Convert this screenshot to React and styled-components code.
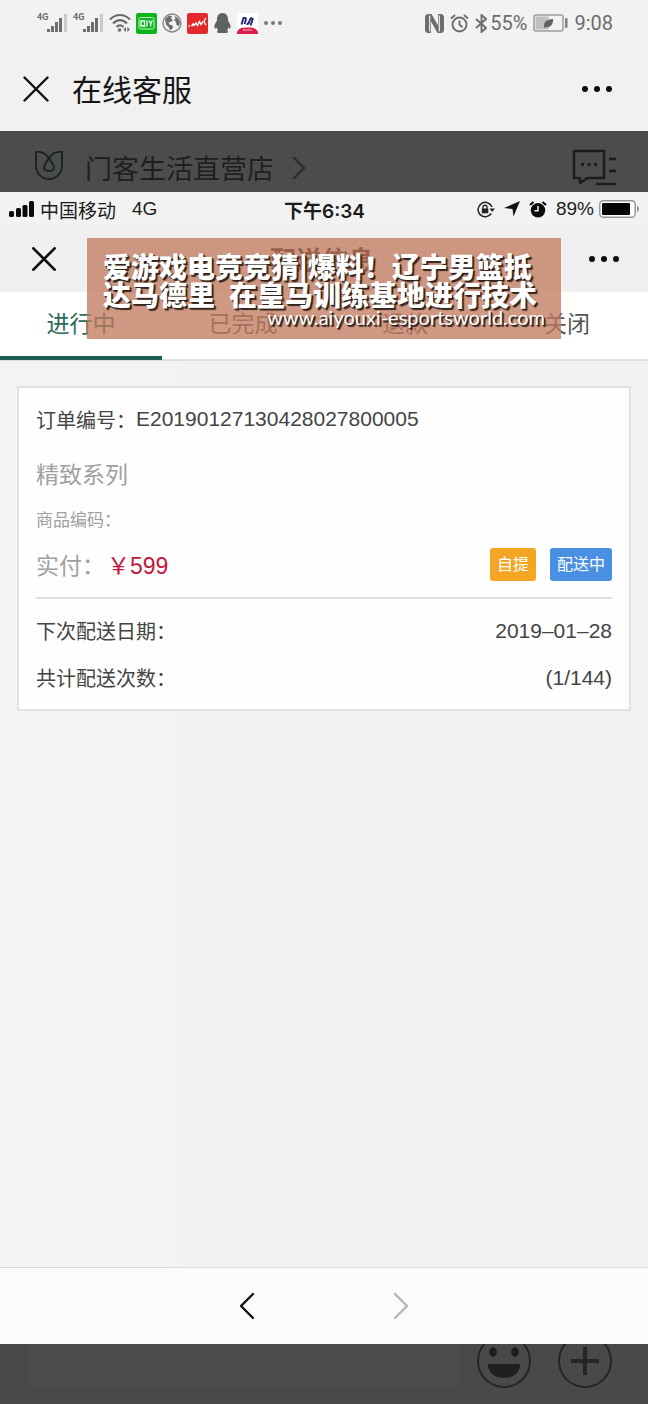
import React, { useState } from 'react';
import styled, { createGlobalStyle } from 'styled-components';

const GlobalStyles = createGlobalStyle`
  * {
    box-sizing: border-box;
  }

  body {
    margin: 0;
    background-color: #f2f3f3;
    font-family: 'Liberation Sans', 'Noto Sans CJK SC', sans-serif;
  }

  svg {
    display: block;
    flex: none;
  }

  button {
    padding: 0;
    border: none;
    background: none;
    font-family: inherit;
    cursor: pointer;
  }
`;

const Page = styled.div`
  min-height: 100vh;
  display: flex;
  flex-direction: column;
`;

const AndroidStatus = styled.div`
  display: flex;
  justify-content: space-between;
  align-items: center;
  height: 46px;
  padding: 0 35px 0 37px;
  background-color: #f1f2f1;
  color: #6b6e6b;
  font-family: Roboto, sans-serif;
  font-size: 20px;
`;

const IconRow = styled.div`
  display: flex;
  align-items: center;
  gap: ${(props) => props.$gap}px;
`;

const Signal = styled.div`
  display: flex;
  align-items: flex-start;
  width: 31px;
  font-size: 9px;
  font-weight: 700;
  line-height: 9px;

  svg {
    margin-left: -1px;
  }
`;

const TitleBar = styled.header`
  display: flex;
  align-items: center;
  height: 85px;
  padding: 0 35px 0 23px;
  background-color: #f1f1f1;
`;

const PageTitle = styled.h1`
  flex: 1;
  margin: 0 0 0 23px;
  padding-bottom: 2px;
  color: #161616;
  font-size: 30px;
  font-weight: 400;
`;

const StoreBar = styled.div`
  display: flex;
  align-items: center;
  height: 61px;
  padding: 12px 31px 0 35px;
  background-color: #4c4c4c;
  color: #1e2020;
`;

const StoreName = styled.div`
  margin: 0 18px 0 22px;
  font-size: 27px;
`;

const Spacer = styled.div`
  flex: 1;
`;

const Sheet = styled.div`
  position: relative;
  flex: 1;
  display: flex;
  flex-direction: column;
`;

const PhoneStatus = styled.div`
  display: grid;
  grid-template-columns: 1fr auto 1fr;
  align-items: center;
  height: 34px;
  padding: 0 8px 0 9px;
  background-color: #f2f2f2;
  color: #1c1c1c;
  font-size: 19px;
`;

const Carrier = styled.div`
  display: flex;
  align-items: center;
  gap: 6px;
`;

const Network = styled.span`
  margin-left: 10px;
`;

const Clock = styled.div`
  font-family: Inter, 'Noto Sans CJK SC', sans-serif;
  font-weight: 600;
`;

const PhoneIcons = styled.div`
  display: flex;
  justify-content: flex-end;
  align-items: center;
  gap: 9px;
`;

const BatteryLevel = styled.div`
  display: flex;
  align-items: center;
  gap: 5px;
`;

const SheetBar = styled.div`
  display: flex;
  justify-content: space-between;
  align-items: center;
  height: 66px;
  padding: 0 28px 0 32px;
  background-color: #f0f0f0;
`;

const SheetTitle = styled.h2`
  margin: 0;
  padding-bottom: 2px;
  color: #111111;
  font-size: 26px;
  font-weight: 600;
`;

const Tabs = styled.div`
  display: flex;
  height: 69px;
  background-color: #ffffff;
  box-shadow: inset 0 -2px #dfdfdf;
`;

const Tab = styled.button`
  flex: 1;
  height: 68px;
  padding-bottom: 8px;
  color: ${(props) => (props.$active ? '#2c6a5a' : '#555555')};
  font-size: 23px;
  box-shadow: ${(props) => (props.$active ? 'inset 0 -4px #1d5b4c' : 'none')};
`;

const Content = styled.main`
  flex: 1;
  padding: 25px 17px;
  background: linear-gradient(90deg, #f2f3f5 25%, #f1f2f2 30%);
`;

const Card = styled.section`
  padding: 0 17px 8px;
  border: 2px solid #e1e2e3;
  background-color: #fefefe;
  color: #444444;
`;

const OrderNumber = styled.div`
  display: flex;
  align-items: center;
  height: 64px;
  padding-bottom: 2px;
  font-size: 20px;
`;

const OrderValue = styled.span`
  font-size: 21px;
`;

const Series = styled.div`
  color: #a0a0a0;
  font-size: 23px;
  line-height: 47px;
`;

const ProductCode = styled.div`
  color: #a0a0a0;
  font-size: 17px;
  line-height: 43px;
`;

const PriceRow = styled.div`
  display: flex;
  align-items: center;
  gap: 14px;
  height: 44px;
  margin-bottom: 11px;
  color: #a0a0a0;
  font-size: 23px;
`;

const Price = styled.span`
  margin-left: 2px;
  color: #c4183c;
`;

const Tag = styled.span`
  padding: 0 7px;
  border-radius: 3px;
  background-color: ${(props) => props.$color};
  color: #ffffff;
  font-size: 16px;
  line-height: 33px;
`;

const Details = styled.div`
  padding-top: 8px;
  border-top: 2px solid #dddfdf;
`;

const DetailRow = styled.div`
  display: flex;
  justify-content: space-between;
  align-items: center;
  height: 47px;
  font-size: 20px;
`;

const Pager = styled.nav`
  display: flex;
  justify-content: center;
  align-items: center;
  gap: 138px;
  height: 77px;
  border-top: 1px solid #dcdde0;
  background-color: #fafbfd;
`;

const ChatBar = styled.div`
  display: flex;
  align-items: flex-start;
  height: 60px;
  padding: 0 36px 0 28px;
  background-color: #48494a;

  button + button {
    margin-left: 27px;
  }
`;

const ChatInput = styled.input`
  flex: 1;
  min-width: 0;
  height: 43px;
  margin-right: 19px;
  padding: 0 12px;
  border: none;
  background-color: #4b4c4d;
  color: #1e2020;
  font-size: 20px;
`;

const Banner = styled.div`
  position: absolute;
  top: 46px;
  left: 87px;
  right: 87px;
  height: 101px;
  padding: 14px 16px 0;
  overflow: hidden;
  background-color: rgba(192, 121, 92, 0.76);
  color: #ffffff;
  white-space: nowrap;
  text-shadow: 1px 1px 0 #33241e, 2px 2px 1px #33241e;
`;

const BannerTitle = styled.div`
  font-family: 'Noto Sans CJK SC', sans-serif;
  font-size: 28px;
  font-weight: 900;
  line-height: 28px;
`;

const BannerLink = styled.a`
  display: block;
  color: #ffffff;
  font-family: Lato, sans-serif;
  font-size: 20px;
  line-height: 18px;
  text-align: right;
  text-decoration: none;
`;

function SignalIcon() {
  return (
    <Signal>
      4G
      <svg width="21" height="20" viewBox="0 0 21 20" fill="#6b6e6b">
        <rect x="0" y="16" width="3" height="3" />
        <rect x="4" y="13" width="3" height="6" />
        <rect x="8" y="9" width="3" height="10" />
        <rect x="12" y="5" width="3" height="14" />
        <rect x="17" y="1" width="3" height="18" fill="#c9cbc9" />
      </svg>
    </Signal>
  );
}

function WifiIcon() {
  return (
    <svg width="22" height="20" viewBox="0 0 22 20" fill="none" stroke="#6b6e6b" strokeWidth="2.2">
      <path d="M1 6.5C7 .5 15 .5 21 6.5" />
      <path d="M4 10.5C8.5 6 13.5 6 18 10.5" />
      <path d="M7.5 14c2.3-2.2 4.700-2.200 7 0" />
      <circle cx="10.5" cy="17" r="1.8" fill="#6b6e6b" stroke="none" />
      <path d="M17 14v5l-2.700-2.500zM18.300 14v5l2.700-2.500z" fill="#6b6e6b" stroke="none" />
    </svg>
  );
}

function VideoAppIcon() {
  return (
    <svg width="21" height="21" viewBox="0 0 21 21" fill="none" stroke="#fff">
      <rect width="21" height="21" rx="2" fill="#0cb51c" stroke="none" />
      <path d="M3 6.500C3 5 4 4.500 5.500 4.500h10C17 4.500 18 5 18 6.500v8c0 1-1 1.500-2.500 1.500h-10C4 16 3 15.500 3 14.500z" strokeWidth=".8" />
      <path d="M5 8h3.500v5H5zM8 12l1 2M11 7.500v6M13 7.500l1.700 3 1.700-3M14.700 10.500v3" strokeWidth="1.300" />
    </svg>
  );
}

function GlobeIcon() {
  return (
    <svg width="20" height="20" viewBox="0 0 20 20">
      <circle cx="10" cy="10" r="9" fill="none" stroke="#858785" strokeWidth="1.400" />
      <path d="M3 6l4-3.500 3 .5-1 2.500 2 1.500-2.500 2-2 .5 1 2 3 1 .5 2-2.500 3-2-3.500-2.500-2.500zM12 3l4 2 2 4-1 4-2.500-1-.5-3-2-2 1.500-1.500z" fill="#6b6e6b" />
    </svg>
  );
}

function StockAppIcon() {
  return (
    <svg width="21" height="21" viewBox="0 0 21 21" fill="none" stroke="#fff">
      <rect width="21" height="21" rx="2" fill="#e3292c" stroke="none" />
      <path d="M1.500 13.500l1.500-1M4.500 13l1.500-2 1 1.500 2-2.500 1.500 2.500 2-4 1.500 3 2.500-3.500" strokeWidth="1.400" />
      <path d="M19 5c-2 2-2 5 0 7" strokeWidth="1.200" />
    </svg>
  );
}

function PenguinIcon() {
  return (
    <svg width="19" height="20" viewBox="0 0 19 20" fill="#5f625f">
      <path d="M9.500 0C5.500 0 4 3 4 6.500L3.800 8C2.500 9.800 1 12.500 1.500 15c.5 1 1.300.2 2-.8.2 1.300.8 2.300 1.600 3C3.500 18 3.800 20 6 20h7c2.200 0 2.500-2 .9-2.800.8-.7 1.400-1.700 1.600-3 .7 1 1.500 1.800 2 .8.500-2.500-1-5.200-2.300-7L15 6.500C15 3 13.500 0 9.500 0z" />
    </svg>
  );
}

function NewsAppIcon() {
  return (
    <svg width="21" height="21" viewBox="0 0 21 21" fill="none">
      <rect width="21" height="21" rx="2" fill="#fff" />
      <path d="M4.500 11.500L6.500 5H8c1.500 0 1 1.500.5 3L7.500 11M9.500 11c2 .5 2.500-1 3-3s1-3 2.500-3M13 11.500h1L16 5" stroke="#25247b" strokeWidth="1.900" />
      <path d="M0 19c2-4 5-4.500 10.500-4.500S19 15 21 19v2H0z" fill="#dc1d4b" />
      <path d="M6 17h9" stroke="#f6a6b8" strokeWidth="1.400" strokeDasharray="2 .6" />
    </svg>
  );
}

function NfcIcon() {
  return (
    <svg width="19" height="19" viewBox="0 0 19 19">
      <path d="M4 0h2.500L13 11.500V0H15c3 0 4 1 4 4v11c0 3-1 4-4 4h-2.500L6 7.500V19H4c-3 0-4-1-4-4V4c0-3 1-4 4-4z" fill="#6b6e6b" />
      <path d="M4.700 1.500v16M14.300 1.500v16" stroke="#f1f2f1" strokeWidth="1.200" />
    </svg>
  );
}

function AlarmIcon() {
  return (
    <svg width="19" height="19" viewBox="0 0 19 19" fill="none" stroke="#6b6e6b" strokeWidth="1.900">
      <circle cx="9.500" cy="10.500" r="7" />
      <path d="M9.500 6.500v4.300l3 2.500M1 4.500l4-3.500M18 4.500l-4-3.500" />
    </svg>
  );
}

function BluetoothIcon() {
  return (
    <svg width="12" height="19" viewBox="0 0 12 19" fill="none" stroke="#6b6e6b" strokeWidth="1.900">
      <path d="M1 5l10 9-4.500 4V1L11 5 1 14" />
    </svg>
  );
}

function EcoBatteryIcon() {
  return (
    <svg width="35" height="18" viewBox="0 0 35 18">
      <rect x="1" y="1" width="29" height="16" rx="2" fill="none" stroke="#9c9e9c" strokeWidth="1.500" />
      <rect x="2.500" y="2.500" width="13" height="13" fill="#bfc1bf" />
      <path d="M11 14c-.5-5 1.500-8.500 9-9 .5 5-2.500 9-7 8z" fill="#5f625f" />
      <rect x="32" y="4" width="2.500" height="10" rx="1" fill="#7d807d" />
    </svg>
  );
}

function CloseIcon({ size, weight }) {
  return (
    <svg width={size} height={size} viewBox="0 0 26 26" fill="none" stroke="#111" strokeWidth={weight}>
      <path d="M1.500 1.500l23 23M24.500 1.500l-23 23" strokeLinecap="round" />
    </svg>
  );
}

function DotsIcon({ width = 32, color = '#0b0b0b', r = 3 }) {
  return (
    <svg width={width} height="8" viewBox={`0 0 ${width} 8`} fill={color}>
      <circle cx={r + 1} cy="4" r={r} />
      <circle cx={width / 2} cy="4" r={r} />
      <circle cx={width - r - 1} cy="4" r={r} />
    </svg>
  );
}

function TulipIcon() {
  return (
    <svg width="28" height="34" viewBox="1 1 28 34" fill="none" stroke="#1b2624" strokeWidth="2">
      <path d="M2 2c4-.5 9 1 12 5l1 2 1-2c3-4 8-5.500 12-5v14c0 7-5.500 13-13 13S2 23 2 16z" />
      <path d="M15 8c-2 4-5 6.500-5 9.500C10 20 12.500 21 15 21s5-1 5-3.500C20 14.500 17 12 15 8" />
    </svg>
  );
}

function ChatListIcon() {
  return (
    <svg width="45" height="37" viewBox="0 0 45 37" fill="none" stroke="#1b1c1c" strokeWidth="2.500">
      <path d="M2 2h30v27H15.500L8 34v-5H2z" strokeLinejoin="round" />
      <path d="M37 10h7M37 22h7M24 35h20" />
      <path d="M9 15.500h3M15.500 15.500h3M22 15.500h3" strokeWidth="3" />
    </svg>
  );
}

function ChevronIcon({ left, width, height, color, weight }) {
  return (
    <svg width={width} height={height} viewBox="0 0 16 28" fill="none" stroke={color} strokeWidth={weight}>
      <path d={left ? 'M14 2L2 14l12 12' : 'M2 2l12 12L2 26'} strokeLinecap="round" strokeLinejoin="round" />
    </svg>
  );
}

function CellBarsIcon() {
  return (
    <svg width="25" height="16" viewBox="0 0 25 16" fill="#0b0b0b">
      <rect x="0" y="10" width="5" height="6" rx="1.500" />
      <rect x="7" y="7" width="5" height="9" rx="1.500" />
      <rect x="13.500" y="4" width="5" height="12" rx="1.500" />
      <rect x="20" y="0" width="5" height="16" rx="1.500" />
    </svg>
  );
}

function RotationLockIcon() {
  return (
    <svg width="18" height="17" viewBox="0 0 18 17" fill="none" stroke="#222">
      <path d="M15 6A7.200 7.200 0 1 0 14.300 12.500" strokeWidth="1.500" />
      <path d="M12.500 7.500h5.500L15.200 11z" fill="#222" stroke="none" />
      <rect x="4.800" y="7.500" width="6.500" height="4.800" fill="#222" stroke="none" />
      <path d="M6 8V6.200c0-2.600 4-2.600 4 0V8" strokeWidth="1.300" />
    </svg>
  );
}

function LocationIcon() {
  return (
    <svg width="16" height="16" viewBox="0 0 16 16" fill="#111">
      <path d="M16 0L9.500 15.500 8.500 8 0 7z" />
    </svg>
  );
}

function SolidAlarmIcon() {
  return (
    <svg width="18" height="17" viewBox="0 0 18 17" fill="none">
      <circle cx="9" cy="9.300" r="7.200" fill="#0b0b0b" />
      <path d="M1 4l3.500-3M17 4l-3.500-3" stroke="#0b0b0b" strokeWidth="2.200" />
      <path d="M9 5v4.800H5.500" stroke="#f2f2f2" strokeWidth="1.500" />
    </svg>
  );
}

function BatteryIcon() {
  return (
    <svg width="41" height="18" viewBox="0 0 41 18">
      <rect x=".8" y=".8" width="35.400" height="16.400" rx="3.500" fill="#fff" stroke="#939393" strokeWidth="1.400" />
      <rect x="3" y="3" width="28" height="12" rx="1" fill="#050505" />
      <path d="M38 6c2.500 0 2.500 6 0 6z" fill="#939393" />
    </svg>
  );
}

function SmileIcon() {
  return (
    <svg width="54" height="44" viewBox="0 10 54 44">
      <circle cx="27" cy="27" r="26" fill="none" stroke="#242526" strokeWidth="2" />
      <ellipse cx="16" cy="18" rx="3.800" ry="4.800" fill="#1f2021" />
      <ellipse cx="38" cy="18" rx="3.800" ry="4.800" fill="#1f2021" />
      <path d="M11 30h32c0 9-7 14-16 14s-16-5-16-14z" fill="#1f2021" />
    </svg>
  );
}

function PlusIcon() {
  return (
    <svg width="54" height="44" viewBox="0 10 54 44" fill="none" stroke="#242526">
      <circle cx="27" cy="27" r="26" strokeWidth="2" />
      <path d="M27 13v28M13 27h28" strokeWidth="4" />
    </svg>
  );
}

const tabs = ['进行中', '已完成', '退款', '关闭'];

function App() {
  const [activeTab, setActiveTab] = useState(0);

  return (
    <>
      <GlobalStyles />
      <Page>
        <AndroidStatus>
          <IconRow $gap={5}>
            <SignalIcon />
            <SignalIcon />
            <WifiIcon />
            <VideoAppIcon />
            <GlobeIcon />
            <StockAppIcon />
            <PenguinIcon />
            <NewsAppIcon />
            <DotsIcon width={20} color="#777977" r={2} />
          </IconRow>
          <IconRow $gap={6}>
            <NfcIcon />
            <AlarmIcon />
            <IconRow $gap={3}>
              <BluetoothIcon />
              <span>55%</span>
            </IconRow>
            <EcoBatteryIcon />
            <span>9:08</span>
          </IconRow>
        </AndroidStatus>

        <TitleBar>
          <button aria-label="关闭">
            <CloseIcon size={26} weight={2.4} />
          </button>
          <PageTitle>在线客服</PageTitle>
          <button aria-label="更多">
            <DotsIcon />
          </button>
        </TitleBar>

        <StoreBar>
          <TulipIcon />
          <StoreName>门客生活直营店</StoreName>
          <ChevronIcon width={14} height={24} color="#2b2c2c" weight={2.6} />
          <Spacer />
          <ChatListIcon />
        </StoreBar>

        <Sheet>
          <PhoneStatus>
            <Carrier>
              <CellBarsIcon />
              <span>中国移动</span>
              <Network>4G</Network>
            </Carrier>
            <Clock>下午6:34</Clock>
            <PhoneIcons>
              <RotationLockIcon />
              <LocationIcon />
              <SolidAlarmIcon />
              <BatteryLevel>
                <span>89%</span>
                <BatteryIcon />
              </BatteryLevel>
            </PhoneIcons>
          </PhoneStatus>

          <SheetBar>
            <button aria-label="关闭">
              <CloseIcon size={24} weight={3} />
            </button>
            <SheetTitle>配送信息</SheetTitle>
            <button aria-label="更多">
              <DotsIcon />
            </button>
          </SheetBar>

          <Tabs>
            {tabs.map((name, index) => (
              <Tab key={name} $active={index === activeTab} onClick={() => setActiveTab(index)}>
                {name}
              </Tab>
            ))}
          </Tabs>

          <Content>
            <Card>
              <OrderNumber>
                订单编号：
                <OrderValue>E20190127130428027800005</OrderValue>
              </OrderNumber>
              <Series>精致系列</Series>
              <ProductCode>商品编码：</ProductCode>
              <PriceRow>
                <div>
                  实付：<Price>￥599</Price>
                </div>
                <Spacer />
                <Tag $color="#f5a524">自提</Tag>
                <Tag $color="#4a90e2">配送中</Tag>
              </PriceRow>
              <Details>
                <DetailRow>
                  <span>下次配送日期：</span>
                  <OrderValue>2019–01–28</OrderValue>
                </DetailRow>
                <DetailRow>
                  <span>共计配送次数：</span>
                  <OrderValue>(1/144)</OrderValue>
                </DetailRow>
              </Details>
            </Card>
          </Content>

          <Pager>
            <button aria-label="上一页">
              <ChevronIcon left width={16} height={28} color="#111111" weight={2.4} />
            </button>
            <button aria-label="下一页">
              <ChevronIcon width={16} height={28} color="#b5b6b8" weight={2.4} />
            </button>
          </Pager>

          <Banner>
            <BannerTitle>爱游戏电竞竞猜|爆料！辽宁男篮抵</BannerTitle>
            <BannerTitle>达马德里&ensp;在皇马训练基地进行技术</BannerTitle>
            <BannerLink href="#">www.aiyouxi-esportsworld.com</BannerLink>
          </Banner>
        </Sheet>

        <ChatBar>
          <ChatInput type="text" aria-label="消息" />
          <button aria-label="表情">
            <SmileIcon />
          </button>
          <button aria-label="添加">
            <PlusIcon />
          </button>
        </ChatBar>
      </Page>
    </>
  );
}

export default App;
